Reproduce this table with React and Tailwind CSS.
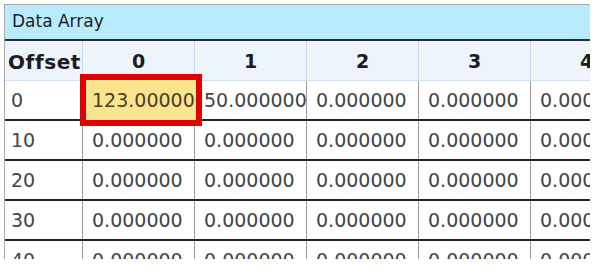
const cols = ['0', '1', '2', '3', '4'];
const rows = [
  { offset: '0', values: ['123.000000', '50.000000', '0.000000', '0.000000', '0.000000'] },
  { offset: '10', values: ['0.000000', '0.000000', '0.000000', '0.000000', '0.000000'] },
  { offset: '20', values: ['0.000000', '0.000000', '0.000000', '0.000000', '0.000000'] },
  { offset: '30', values: ['0.000000', '0.000000', '0.000000', '0.000000', '0.000000'] },
  { offset: '40', values: ['0.000000', '0.000000', '0.000000', '0.000000', '0.000000'] },
];

export default function App() {
  return (
    <div className="w-[597px] h-[270px] bg-white pt-[4px] pl-[4px] overflow-hidden" style={{ fontFamily: '"DejaVu Sans", Verdana, sans-serif' }}>
      <div className="w-[586px] h-[255px] border-t border-l border-[#a8a8a8] overflow-hidden flex flex-col">
        <div className="h-[36px] shrink-0 bg-[#b8ebfb] flex items-center pl-[7px] text-[17px] text-[#1e1e1e] border-b-2 border-[#2a2a2a]">
          Data Array
        </div>

        <div className="flex h-[40px] shrink-0 bg-[#eef4fc] border-b border-[#d2e1f2]">
          <div className="w-[78px] shrink-0 flex items-center pl-[3px] pt-[2px] font-bold text-[20px] tracking-[0.6px] text-[#1c1c1c] overflow-hidden whitespace-nowrap border-r border-[#c9d9ea]">
            Offset
          </div>
          {cols.map((c) => (
            <div key={c} className="w-[112px] shrink-0 flex items-center justify-center pt-[2px] font-bold text-[19px] text-[#1c1c1c] border-r border-[#c9d9ea]">
              {c}
            </div>
          ))}
        </div>

        {rows.map((r, ri) => (
          <div key={r.offset} className="flex h-[40px] shrink-0 border-b-2 border-[#262626]">
            <div className="w-[78px] shrink-0 flex items-center pl-[6px] text-[19px] text-[#444] border-r border-[#9a9a9a]">
              {r.offset}
            </div>
            {r.values.map((v, vi) => (
              <div key={vi} className="relative w-[112px] shrink-0 flex items-center pl-[9px] text-[19px] text-[#444] border-r border-[#9a9a9a] whitespace-nowrap">
                {ri === 0 && vi === 0 ? (
                  <div className="absolute left-[-3px] top-[-7px] right-[-8px] bottom-[-7px] border-[6px] border-[#e00000] bg-[#fae48e] flex items-center pl-[6px] overflow-hidden text-[#4a4020] z-10">
                    <span className="whitespace-nowrap">{v}</span>
                  </div>
                ) : (
                  <span className="min-w-0 overflow-hidden">{v}</span>
                )}
              </div>
            ))}
          </div>
        ))}
      </div>
    </div>
  );
}
